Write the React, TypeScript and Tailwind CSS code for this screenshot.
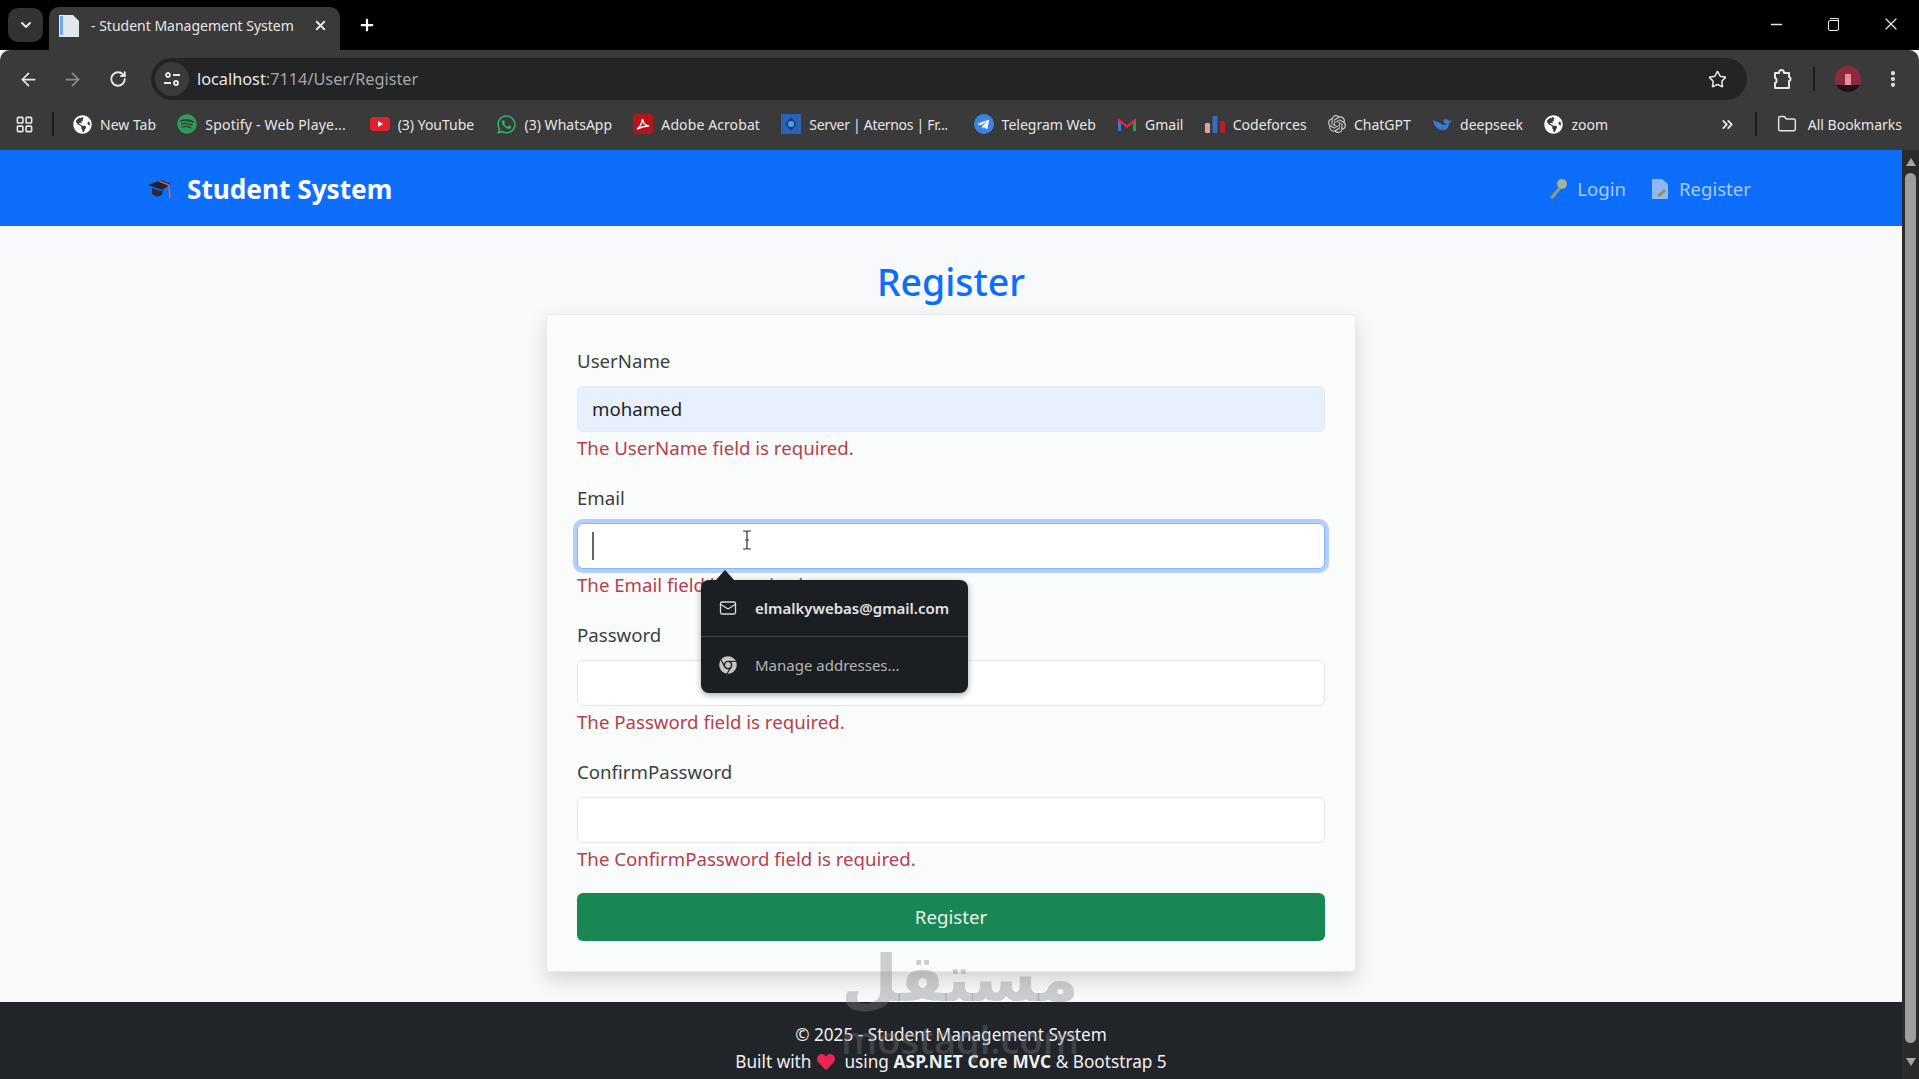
import type { ReactNode } from 'react'
import {
  ArrowLeft,
  ArrowRight,
  ChevronDown,
  ChevronsRight,
  EllipsisVertical,
  Folder,
  LayoutGrid,
  Mail,
  Minus,
  Plus,
  RotateCw,
  Star,
  X,
} from 'lucide-react'
import { FaChrome, FaGlobeAmericas, FaHeart, FaSpotify, FaTelegramPlane, FaWhatsapp } from 'react-icons/fa'
import { SiOpenai } from 'react-icons/si'

function GlobeIcon() {
  return <FaGlobeAmericas size={19} className="text-white" />
}

function YouTubeIcon() {
  return (
    <svg width="20" height="20" viewBox="0 0 20 20">
      <rect x="0" y="3" width="20" height="14" rx="4" fill="#e0202e" />
      <path d="M8 7l5 3-5 3z" fill="#fff" />
    </svg>
  )
}

function AcrobatIcon() {
  return (
    <svg width="20" height="20" viewBox="0 0 20 20">
      <rect width="20" height="20" rx="3" fill="#b3151b" />
      <path d="M4 15c3-2 5-6 5.500-10 .5 4 2.500 6.500 6.500 7-4 0-8 1-12 3z" fill="none" stroke="#fff" strokeWidth="1.500" />
    </svg>
  )
}

function AternosIcon() {
  return (
    <svg width="20" height="20" viewBox="0 0 20 20">
      <rect width="20" height="20" fill="#2a62b8" />
      <path d="M10 3l6 7-6 7-6-7z" fill="#1c3f78" />
      <circle cx="10" cy="10" r="3" fill="#4d9cf0" />
    </svg>
  )
}

function TelegramIcon() {
  return (
    <span className="flex h-5 w-5 items-center justify-center rounded-full bg-[#3b82e8]">
      <FaTelegramPlane size={13} className="text-white" />
    </span>
  )
}

function GmailIcon() {
  return (
    <svg width="20" height="16" viewBox="0 0 20 16">
      <path d="M1 3v12h3V6z" fill="#3a78d8" />
      <path d="M19 3v12h-3V6z" fill="#2b9b58" />
      <path d="M1 2l9 7 9-7v3l-9 7-9-7z" fill="#e5264a" />
    </svg>
  )
}

function CodeforcesIcon() {
  return (
    <svg width="20" height="18" viewBox="0 0 20 18">
      <rect x="0" y="8" width="5" height="10" rx="1" fill="#e0a09c" />
      <rect x="7.500" y="1" width="5" height="17" rx="1" fill="#2f6fc4" />
      <rect x="15" y="6" width="5" height="12" rx="1" fill="#b51f2a" />
    </svg>
  )
}

function DeepseekIcon() {
  return (
    <svg width="20" height="18" viewBox="0 0 20 18">
      <path d="M1 5c1 7 6 11 12 10 3-1 4-4 4-7 1 0 2-1 3-3-2 1-3 1-4 0-2-2-4-1-5 1 1 2 2 3 4 3-2 2-5 1-7-1-2-1-5-2-7-3z" fill="#3b78d8" />
    </svg>
  )
}

function TabFavicon() {
  return (
    <svg width="20" height="24" viewBox="0 0 20 24">
      <path d="M0 1h14l6 6v16H0z" fill="#e3e6ea" />
      <rect x="1" y="2" width="3" height="19" fill="#6ea8f5" />
    </svg>
  )
}

function ExtensionIcon() {
  return (
    <svg width="22" height="22" viewBox="0 0 22 22" fill="none" stroke="#e6e6e6" strokeWidth="2" strokeLinejoin="round">
      <path d="M4 5h4c0-4 5-4 5 0h5v4c2 0 2 4 0 4v7H4v-5c2 0 2-5 0-5z" />
    </svg>
  )
}

function CapIcon() {
  return (
    <svg width="25" height="25" viewBox="0 0 25 25">
      <path d="M0 8l13-5 10 4-9 6z" fill="#1f2430" />
      <path d="M4 11v6c3 3 7 3 10 1l1-5-2 1z" fill="#2a2d36" />
      <path d="M11 4l10 4 1 13" fill="none" stroke="#d9605c" strokeWidth="1.500" />
    </svg>
  )
}

function KeyIcon() {
  return (
    <svg width="20" height="22" viewBox="0 0 20 22">
      <circle cx="14" cy="6" r="5" fill="#a3b59a" />
      <path d="M11 9L2 19l2 2 3-2 1-2 5-6z" fill="#8f9c82" />
    </svg>
  )
}

function DocIcon() {
  return (
    <svg width="16" height="22" viewBox="0 0 16 22">
      <path d="M0 1h10l6 5v15H0z" fill="#8fb9f5" />
      <path d="M5 17l7-6 2 2-6 6z" fill="#a08a6a" />
    </svg>
  )
}

function ProfileIcon() {
  return (
    <span className="relative flex h-[26px] w-[26px] items-center justify-center overflow-hidden rounded-full bg-[#8e2a3c]">
      <span className="h-[11px] w-[6px] bg-[#e09098]" />
      <span className="absolute inset-x-0 bottom-0 h-[7px] bg-[#1a1416]" />
    </span>
  )
}

const bookmarks: { label: string; icon: ReactNode; labelClass?: string }[] = [
  { label: 'New Tab', icon: <GlobeIcon /> },
  {
    label: 'Spotify - Web Playe...',
    icon: <FaSpotify size={20} className="text-[#2c9c58]" />,
    labelClass: 'w-[143px] tracking-[0.2px]',
  },
  { label: '(3) YouTube', icon: <YouTubeIcon /> },
  { label: '(3) WhatsApp', icon: <FaWhatsapp size={21} className="text-[#35b565]" /> },
  { label: 'Adobe Acrobat', icon: <AcrobatIcon />, labelClass: 'tracking-[0.1px]' },
  { label: 'Server | Aternos | Fr...', icon: <AternosIcon />, labelClass: 'w-[143px] tracking-[-0.3px]' },
  { label: 'Telegram Web', icon: <TelegramIcon /> },
  { label: 'Gmail', icon: <GmailIcon /> },
  { label: 'Codeforces', icon: <CodeforcesIcon /> },
  { label: 'ChatGPT', icon: <SiOpenai size={18} className="text-[#c9c9c9]" /> },
  { label: 'deepseek', icon: <DeepseekIcon /> },
  { label: 'zoom', icon: <GlobeIcon /> },
]

function BrowserChrome() {
  return (
    <header className="shrink-0 font-['Noto_Sans',sans-serif] text-[#e6e6e6]">
      <div className="flex h-[50px] items-end bg-black pl-2">
        <div className="mb-2 flex h-[34px] w-[35px] items-center justify-center rounded-[10px] bg-[#333]">
          <ChevronDown size={16} strokeWidth={3} />
        </div>
        <div className="ml-[6px] flex h-[43px] w-[291px] items-center rounded-t-[10px] bg-[#3a3a3a] pb-[6px] pl-[10px] pr-3">
          <TabFavicon />
          <span className="ml-[12px] flex-1 whitespace-nowrap text-[14px]">- Student Management System</span>
          <X size={15} strokeWidth={3} />
        </div>
        <div className="mb-4 ml-[13px] flex w-7 items-center justify-center text-white">
          <Plus size={18} strokeWidth={3} />
        </div>
        <div className="ml-auto mb-4 flex items-center text-[#e8e8e8]">
          <span className="flex w-14 justify-center"><Minus size={17} /></span>
          <span className="relative flex w-[59px] justify-center">
            <span className="mt-[2px] h-[11px] w-[11px] rounded-[2px] border-[1.5px] border-[#e8e8e8]" />
            <span className="absolute left-[26px] top-0 h-[9px] w-[9px] rounded-tr-[2px] border-r-[1.5px] border-t-[1.5px] border-[#e8e8e8]" />
          </span>
          <span className="flex w-[56px] justify-center"><X size={20} strokeWidth={1.5} /></span>
        </div>
      </div>

      <div className="flex h-[52px] items-start rounded-t-[10px] bg-[#3a3a3a] pt-2">
        <div className="flex h-[42px] w-[151px] shrink-0 items-center text-[#e6e6e6]">
          <ArrowLeft size={21} strokeWidth={2} className="ml-[18px]" />
          <ArrowRight size={21} strokeWidth={2} className="ml-[23px] text-[#8a8a8a]" />
          <RotateCw size={18} strokeWidth={2.5} className="ml-[26px]" />
        </div>
        <div className="flex h-[42px] w-[1596px] shrink-0 items-center rounded-full bg-[#232425] pl-1 pr-[20px]">
          <span className="flex h-[34px] w-[34px] items-center justify-center rounded-full bg-[#3a3a3a]">
            <svg width="18" height="18" viewBox="0 0 18 18" fill="none" stroke="#e6e6e6" strokeWidth="1.800">
              <circle cx="5" cy="5" r="2" />
              <path d="M10 5h7M1 13h7" />
              <circle cx="13" cy="13" r="2" />
            </svg>
          </span>
          <span className="ml-[8px] text-[16.3px] text-[#e8e8e8]">
            localhost<span className="text-[#a6a6a6]">:7114/User/Register</span>
          </span>
          <Star size={19} strokeWidth={2} className="ml-auto" />
        </div>
        <div className="flex h-[42px] items-center">
          <span className="ml-6"><ExtensionIcon /></span>
          <span className="ml-[20px] h-6 w-[2px] bg-[#1b1b1b]" />
          <span className="ml-[20px]"><ProfileIcon /></span>
          <EllipsisVertical size={20} strokeWidth={3} className="ml-[22px]" />
        </div>
      </div>

      <div className="flex h-[48px] items-center bg-[#3a3a3a] pb-1 text-[14px]">
        <LayoutGrid size={19} strokeWidth={2} className="ml-[15px]" />
        <span className="ml-[18px] h-6 w-[2px] bg-[#1b1b1b]" />
        <div className="ml-[19px] flex flex-1 items-center gap-[21.3px]">
          {bookmarks.map((b) => (
            <span key={b.label} className="flex items-center gap-2 whitespace-nowrap">
              {b.icon}
              <span className={b.labelClass}>{b.label}</span>
            </span>
          ))}
        </div>
        <ChevronsRight size={17} strokeWidth={2.5} />
        <span className="ml-[19px] h-6 w-[2px] bg-[#1b1b1b]" />
        <span className="ml-[20px] mr-[17px] flex items-center gap-[11px] whitespace-nowrap">
          <Folder size={20} strokeWidth={1.75} />
          All Bookmarks
        </span>
      </div>
    </header>
  )
}

function Field({ label, error, value, focused, filled }: {
  label: string
  error: string
  value?: string
  focused?: boolean
  filled?: boolean
}) {
  return (
    <div className="mb-5">
      <label className="mb-[10px] block h-[30px] text-[18.65px] leading-[30px] text-[#3a3f44]">{label}</label>
      <div
        className={
          focused
            ? 'flex h-[46px] items-center rounded-[6px] border border-[#86b7fe] bg-white px-[14px] text-[18.65px] text-[#212529] shadow-[0_0_0_4px_rgba(13,110,253,0.3)]'
            : filled
              ? 'flex h-[46px] items-center rounded-[6px] border border-[#e3e8f2] bg-[#e8f0fe] px-[14px] text-[18.65px] text-[#212529]'
              : 'flex h-[46px] items-center rounded-[6px] border border-[#e4e6e8] bg-white px-[14px] text-[18.65px] text-[#212529]'
        }
      >
        {value}
        {focused && <span className="h-7 w-[2px] bg-[#666]" />}
      </div>
      <p className="mt-px h-[30px] text-[18.65px] leading-[30px] text-[#b5404e]">{error}</p>
    </div>
  )
}

function AutofillPopup() {
  return (
    <div className="absolute left-[154px] top-[265px] w-[267px] rounded-[8px] bg-[#1c1f21] text-[15px] shadow-[0_2px_6px_rgba(0,0,0,0.35)]">
      <span className="absolute -top-[10px] left-[14px] h-0 w-0 border-x-[10px] border-b-[11px] border-x-transparent border-b-[#1c1f21]" />
      <div className="flex h-[57px] items-center border-b border-[#3d4446] pl-[18px]">
        <Mail size={18} strokeWidth={1.75} className="text-[#d8d8d8]" />
        <span className="ml-[18px] font-semibold text-[#e3e3e3]">elmalkywebas@gmail.com</span>
      </div>
      <div className="flex h-[56px] items-center pl-[18px]">
        <FaChrome size={18} className="text-[#c4c4c4]" />
        <span className="ml-[18px] text-[#b4b4b4]">Manage addresses...</span>
      </div>
    </div>
  )
}

function RegisterPage() {
  return (
    <main className="flex flex-1 flex-col items-center bg-[#f8f9fa]">
      <h1 className="mt-[31px] h-[57px] text-[37.4px] font-medium leading-[50px] text-[#0d6efd]">Register</h1>
      <div className="relative w-[810px] rounded-[4px] border border-[#e8eaec] bg-[#fafbfb] px-[30px] pb-[30px] pt-[31px] shadow-[0_8px_20px_rgba(0,0,0,0.15)]">
        <Field label="UserName" value="mohamed" filled error="The UserName field is required." />
        <Field label="Email" focused error="The Email field is required." />
        <Field label="Password" error="The Password field is required." />
        <Field label="ConfirmPassword" error="The ConfirmPassword field is required." />
        <button className="-mt-px block h-[48px] w-full rounded-[6px] bg-[#198754] text-[18.65px] text-[#e9f3ee]">Register</button>
        <AutofillPopup />
        <svg className="absolute left-[194px] top-[215px] text-[#333]" width="12" height="20" viewBox="0 0 12 20" fill="none" stroke="currentColor" strokeWidth="1.200">
          <path d="M2 1h3l1 1 1-1h3M6 2v16M2 19h3l1-1 1 1h3M4 10h4" />
        </svg>
      </div>
    </main>
  )
}

function Footer() {
  return (
    <footer className="h-[77px] shrink-0 bg-[#212529] pt-[19px] text-center text-[17.2px] leading-[27px] text-[#f1f1f1]">
      <p>© 2025 - Student Management System</p>
      <p className="flex items-center justify-center">
        Built with
        <FaHeart size={18} className="ml-[6px] mr-[9px] text-[#e8264f]" />
        using&nbsp;<b className="tracking-[0.2px]">ASP.NET Core MVC</b>&nbsp;&amp; Bootstrap 5
      </p>
    </footer>
  )
}

function Scrollbar() {
  return (
    <div className="flex w-[17px] shrink-0 flex-col items-center bg-[#2b2b2b] pt-2">
      <span className="h-0 w-0 border-x-[5px] border-b-[8px] border-x-transparent border-b-[#a6a6a6]" />
      <span className="mt-[7px] h-[870px] w-[11px] rounded-full bg-[#9e9e9e]" />
      <span className="mt-[15px] h-0 w-0 border-x-[5px] border-t-[8px] border-x-transparent border-t-[#a6a6a6]" />
    </div>
  )
}

export default function App() {
  return (
    <div className="relative flex h-[1079px] w-[1919px] flex-col overflow-hidden font-['Noto_Sans',sans-serif]">
      <BrowserChrome />
      <div className="flex min-h-0 flex-1">
        <div className="flex min-w-0 flex-1 flex-col">
          <nav className="flex h-[76px] shrink-0 items-center bg-[#0d6efd] pl-[148px] pr-[151px] pt-[2px]">
            <CapIcon />
            <span className="ml-[14px] mt-[2px] text-[26.2px] font-bold text-white">Student System</span>
            <span className="ml-auto flex items-center gap-[9px] text-[18.6px] text-[#a6cbfe]">
              <KeyIcon />
              Login
            </span>
            <span className="ml-[26px] flex items-center gap-[11px] text-[18.6px] text-[#a6cbfe]">
              <DocIcon />
              Register
            </span>
          </nav>
          <RegisterPage />
          <Footer />
        </div>
        <Scrollbar />
      </div>
      {/* mostaql watermark over the page */}
      <div className="pointer-events-none absolute left-[820px] top-[941px] w-[280px] text-center font-['DejaVu_Sans',sans-serif] font-bold text-[rgba(125,125,125,0.36)]">
        <div className="h-[75px] text-[65px] leading-[75px]" dir="rtl">مستقل</div>
        <div className="font-['Open_Sans',sans-serif] text-[38px] font-semibold leading-[46px]">mostaql.com</div>
      </div>
    </div>
  )
}
